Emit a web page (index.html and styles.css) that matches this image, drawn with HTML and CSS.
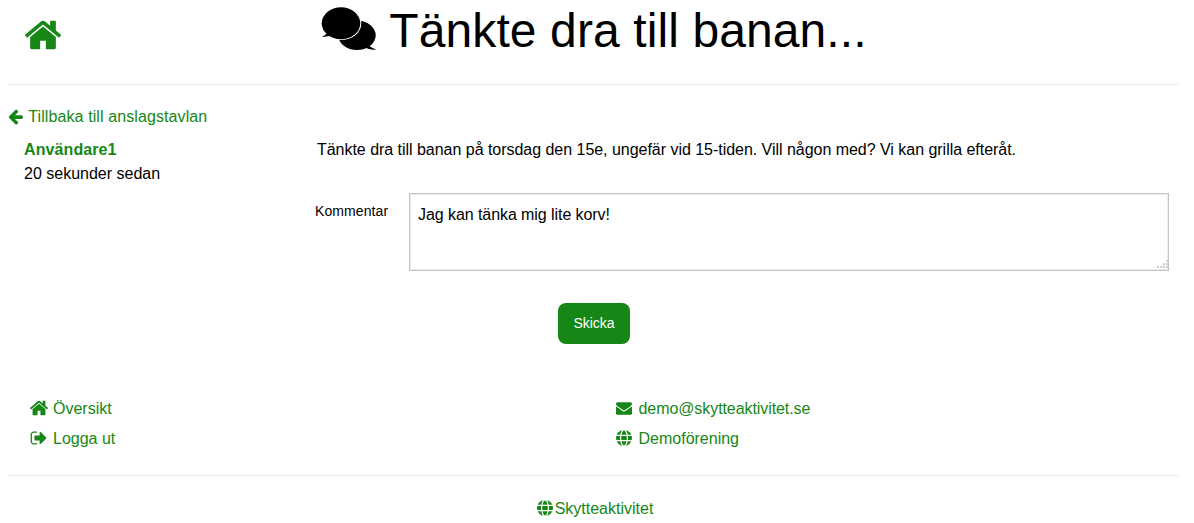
FILE: index.html
```html
<!DOCTYPE html>
<html lang="sv">
<head>
    <meta charset="UTF-8">
    <meta name="viewport" content="width=device-width, initial-scale=1.0">
    <title>Tänkte dra till banan...</title>
    <link rel="stylesheet" href="styles.css">
</head>
<body>
    <svg class="defs" aria-hidden="true">
        <symbol id="i-home" viewBox="0 0 1792 1792"><path d="M1472 992v480q0 26-19 45t-45 19h-384v-384h-256v384h-384q-26 0-45-19t-19-45v-480q0-1 .5-3t.5-3l575-474 575 474q1 2 1 6zm223-69l-62 74q-8 9-21 11h-3q-13 0-21-7l-692-577-692 577q-12 8-24 7-13-2-21-11l-62-74q-8-10-7-23.500t11-21.500l719-599q32-26 76-26t76 26l244 204v-195q0-14 9-23t23-9h192q14 0 23 9t9 23v408l219 182q10 8 11 21.500t-7 23.500z"/></symbol>
        <symbol id="i-comments" viewBox="0 0 55 44">
            <ellipse cx="36" cy="28.300" rx="18.700" ry="14.700"/>
            <path d="M46 37q3 3 8.700 5.500q-5 1-12-2.500z"/>
            <ellipse cx="20" cy="16.300" rx="20.300" ry="16.800" fill="#fff"/>
            <ellipse cx="20" cy="16.300" rx="19.300" ry="16"/>
            <path d="M7 25q-2 3-6.300 4.700q5 .5 12-1.700z"/>
        </symbol>
        <symbol id="i-back" viewBox="0 0 1792 1792"><path d="M1664 896v128q0 53-32.500 90.500t-84.500 37.500h-704l293 294q38 36 38 90t-38 90l-75 76q-37 37-90 37-52 0-91-37l-651-652q-37-37-37-90 0-52 37-91l651-650q38-38 91-38 52 0 90 38l75 74q38 38 38 91t-38 91l-293 293h704q52 0 84.500 37.500t32.500 90.500z"/></symbol>
        <symbol id="i-logout" viewBox="0 0 1792 1792"><path d="M704 1440q0 4 1 20t.5 26.500-3 23.500-10 19.500-20.500 6.500h-320q-119 0-203.500-84.500t-84.500-203.500v-704q0-119 84.500-203.500t203.500-84.500h320q13 0 22.500 9.500t9.500 22.500q0 4 1 20t.5 26.500-3 23.500-10 19.500-20.500 6.500h-320q-66 0-113 47t-47 113v704q0 66 47 113t113 47h312l11.500 1 11.500 3 8 5.500 7 9 2 13.500zm928-544q0 26-19 45l-544 544q-19 19-45 19t-45-19-19-45v-288h-448q-26 0-45-19t-19-45v-384q0-26 19-45t45-19h448v-288q0-26 19-45t45-19 45 19l544 544q19 19 19 45z"/></symbol>
        <symbol id="i-mail" viewBox="0 0 1792 1792"><path d="M1792 710v794q0 66-47 113t-113 47h-1472q-66 0-113-47t-47-113v-794q44 49 101 87 362 246 497 345 57 42 92.500 65.500t94.500 48 110 24.500h2q51 0 110-24.500t94.500-48 92.500-65.500q170-123 498-345 57-39 100-87zm0-294q0 79-49 151t-122 123q-376 261-468 325-10 7-42.500 30.500t-54 38-52 32.500-57.500 27-50 9h-2q-23 0-50-9t-57.500-27-52-32.500-54-38-42.500-30.500q-91-64-262-182.500t-205-142.500q-62-42-117-115.500t-55-136.500q0-78 41.500-130t118.500-52h1472q65 0 112.500 47t47.500 113z"/></symbol>
        <symbol id="i-globe" viewBox="0 0 16 16">
            <circle cx="8" cy="8" r="8"/>
            <g fill="none" stroke="#fff" stroke-width="1.2">
                <ellipse cx="8" cy="8" rx="3.400" ry="8"/>
                <path d="M0 5.400h16M0 10.600h16"/>
            </g>
        </symbol>
    </svg>

    <div class="page">
        <header class="top">
            <a href="#" class="top-home"><svg class="icon"><use href="#i-home"/></svg></a>
            <h1><svg class="icon"><use href="#i-comments"/></svg>Tänkte dra till banan...</h1>
        </header>
        <hr>

        <a href="#" class="back"><svg class="icon"><use href="#i-back"/></svg> Tillbaka till anslagstavlan</a>

        <div class="post">
            <div class="author">
                <a href="#"><strong>Användare1</strong></a>
                <div>20 sekunder sedan</div>
            </div>
            <div class="post-body">
                <p>Tänkte dra till banan på torsdag den 15e, ungefär vid 15-tiden. Vill någon med? Vi kan grilla efteråt.</p>
                <form class="comment">
                    <label for="kommentar">Kommentar</label>
                    <textarea id="kommentar">Jag kan tänka mig lite korv!</textarea>
                </form>
            </div>
        </div>
        <div class="actions">
            <button class="btn" type="button">Skicka</button>
        </div>

        <div class="links">
            <ul>
                <li><a href="#"><svg class="icon icon-home"><use href="#i-home"/></svg>Översikt</a></li>
                <li><a href="#"><svg class="icon icon-logout"><use href="#i-logout"/></svg>Logga ut</a></li>
            </ul>
            <ul>
                <li><a href="#" class="mail"><svg class="icon icon-small"><use href="#i-mail"/></svg>demo@skytteaktivitet.se</a></li>
                <li><a href="#"><svg class="icon icon-small"><use href="#i-globe"/></svg>Demoförening</a></li>
            </ul>
        </div>
        <hr>
        <footer class="footer">
            <a href="#"><svg class="icon"><use href="#i-globe"/></svg>Skytteaktivitet</a>
        </footer>
    </div>
</body>
</html>
```

FILE: styles.css
```css
body {
    font-family: "Liberation Sans", Arial, sans-serif;
    font-size: 16px;
    line-height: 24px;
    color: #000;
    background-color: #fff;
    margin: 0;
}

a {
    color: #168716;
    text-decoration: none;
}

.defs {
    display: none;
}

.icon {
    fill: currentColor;
}

hr {
    border: none;
    border-top: 1px solid #eaeaea;
    margin: 0;
}

.page {
    padding: 0 15px 0 9px;
}

.top {
    display: grid;
    grid-template-columns: 1fr auto 1fr;
    height: 84px;
}

.top-home {
    grid-column: 1;
    grid-row: 1;
    padding: 15px 0 0 14px;
}

.top-home .icon {
    width: 40px;
    height: 40px;
    display: block;
}

h1 {
    grid-column: 2;
    grid-row: 1;
    display: flex;
    align-items: flex-start;
    gap: 13px;
    font-size: 48px;
    line-height: 62px;
    font-weight: normal;
    letter-spacing: 0.1px;
    margin: 0;
    white-space: nowrap;
}

h1 .icon {
    width: 55px;
    height: 44px;
    margin-top: 7px;
}

.back {
    display: block;
    margin-top: 20px;
    letter-spacing: 0.1px;
}

.back .icon {
    width: 17px;
    height: 17px;
    vertical-align: -3px;
    margin-left: -2px;
}

.post {
    display: flex;
    margin-top: 9px;
}

.author {
    width: 293px;
    padding-left: 15px;
}

.author strong {
    letter-spacing: 0.1px;
}

.post-body {
    flex: 1;
}

.post-body p {
    margin: 0;
    letter-spacing: -0.03px;
}

.comment {
    display: flex;
    margin: 31px 10px 0 -2px;
}

.comment label {
    width: 94px;
    font-size: 14px;
    line-height: 20px;
    padding-top: 8px;
    letter-spacing: 0.1px;
}

.comment textarea {
    flex: 1;
    height: 78px;
    box-sizing: border-box;
    border: 1px solid #c4c4c4;
    box-shadow: inset 0 0 0 1px #ececec;
    padding: 9px 8px 7px;
    outline: none;
    font-family: inherit;
    font-size: 16px;
    line-height: 24px;
    letter-spacing: -0.07px;
    color: #000;
}

.comment textarea::-webkit-resizer {
    background: url("data:image/svg+xml,%3Csvg xmlns='http://www.w3.org/2000/svg' width='15' height='15' fill='%23d0d0d0'%3E%3Cpath d='M13 5h2v2h-2zM13 8h2v2h-2zM10 8h2v2h-2zM13 11h2v2h-2zM10 11h2v2h-2zM7 11h2v2H7zM4 11h2v2H4z'/%3E%3C/svg%3E") no-repeat;
}

.actions {
    text-align: center;
    margin-top: 32px;
}

.btn {
    background-color: #168716;
    color: #fff;
    border: none;
    border-radius: 8px;
    width: 72px;
    height: 41px;
    padding: 0 0 2px;
    font-family: inherit;
    font-size: 14px;
    cursor: pointer;
}

.links {
    display: flex;
    margin-top: 50px;
    padding-bottom: 21px;
}

.links ul {
    list-style: none;
    margin: 0;
    padding: 0;
    flex: 1;
}

.links ul:first-child {
    padding-left: 21px;
}

.links ul:last-child {
    padding-left: 22px;
}

.links li {
    height: 30px;
    line-height: 30px;
}

.mail {
    letter-spacing: -0.08px;
}

.icon-home {
    width: 20px;
    height: 20px;
    margin: 0 4px 0 -1px;
    vertical-align: -4px;
}

.icon-logout {
    width: 18px;
    height: 18px;
    margin-right: 5px;
    vertical-align: -3px;
}

.icon-small {
    width: 16px;
    height: 16px;
    margin-right: 7px;
    vertical-align: -2px;
}

.footer {
    text-align: center;
    padding: 21px 0 0 2px;
}

.footer .icon {
    width: 16px;
    height: 16px;
    margin-right: 2px;
    vertical-align: -2px;
}
```
